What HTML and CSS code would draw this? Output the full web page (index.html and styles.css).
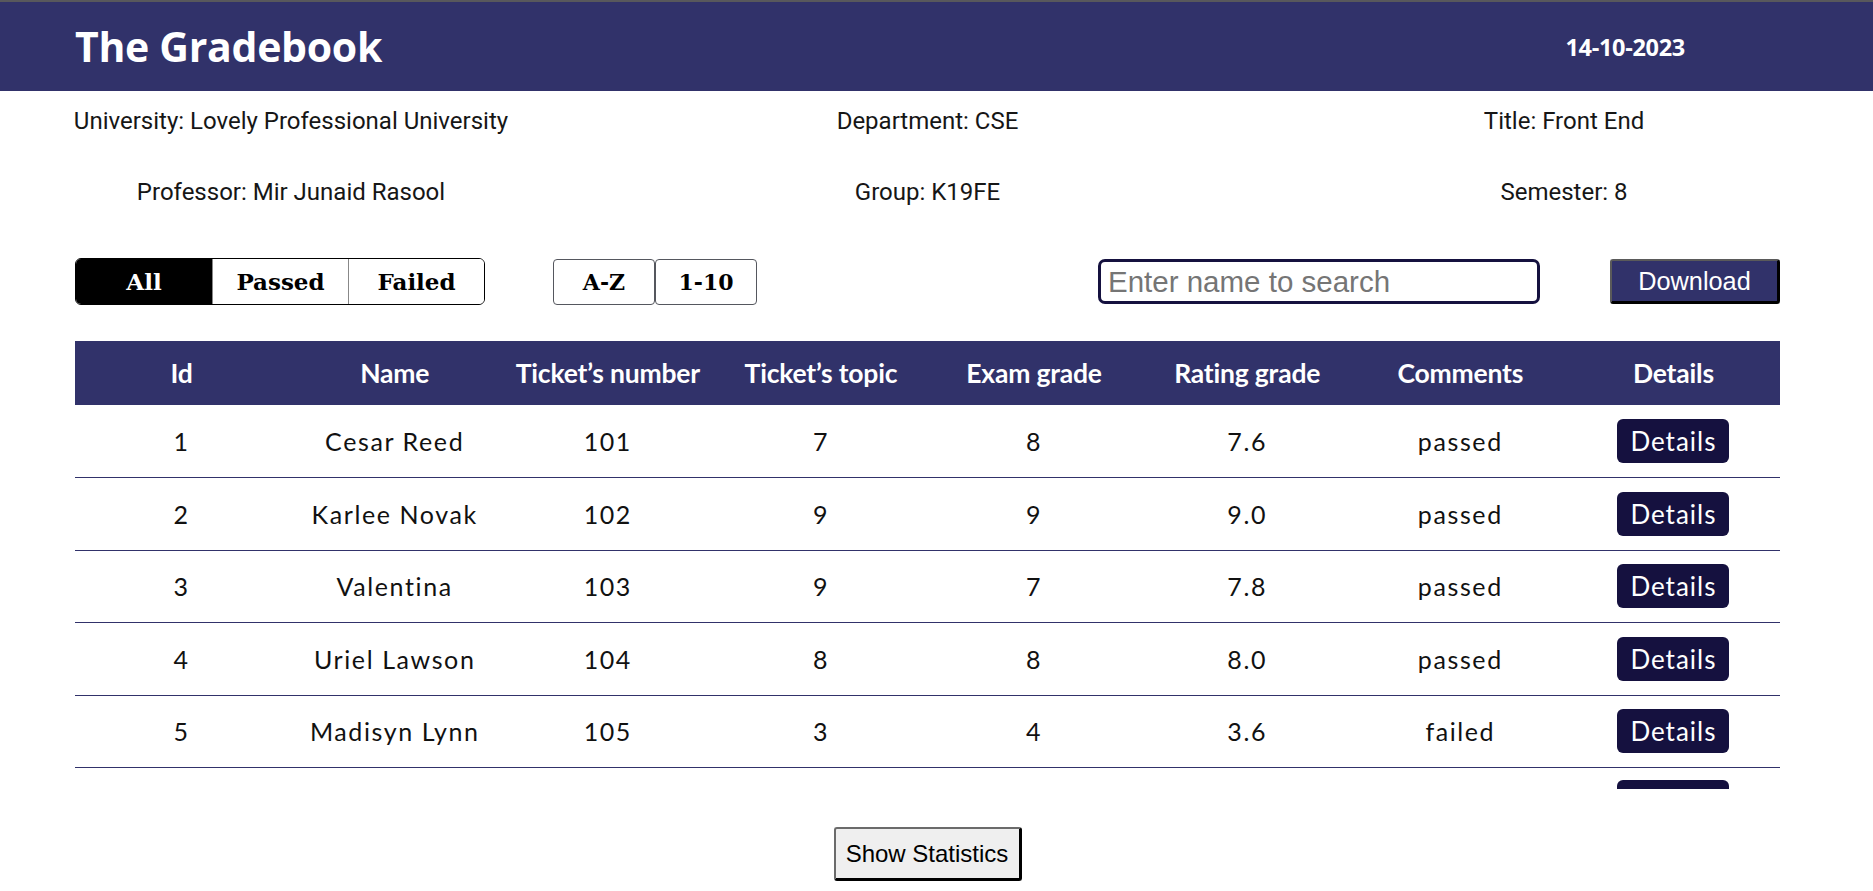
FILE: index.html
```html
<!DOCTYPE html>
<html lang="en">
<head>
<meta charset="utf-8">
<title>The Gradebook</title>
<link rel="stylesheet" href="styles.css">
</head>
<body>
<header class="topbar">
  <h1 class="brand">The Gradebook</h1>
  <div class="date">14-10-2023</div>
</header>

<main class="page">
  <section class="info">
    <div class="info-item">University: Lovely Professional University</div>
    <div class="info-item">Department: CSE</div>
    <div class="info-item">Title: Front End</div>
    <div class="info-item">Professor: Mir Junaid Rasool</div>
    <div class="info-item">Group: K19FE</div>
    <div class="info-item">Semester: 8</div>
  </section>

  <section class="controls">
    <div class="controls-left">
      <div class="segmented">
        <button class="seg seg-active">All</button>
        <button class="seg">Passed</button>
        <button class="seg">Failed</button>
      </div>
      <div class="sorters">
        <button class="sort">A-Z</button>
        <button class="sort">1-10</button>
      </div>
    </div>
    <div class="controls-right">
      <input class="search" type="text" placeholder="Enter name to search">
      <button class="download">Download</button>
    </div>
  </section>

  <section class="table-wrap">
    <table class="grades">
      <thead>
        <tr>
          <th>Id</th><th>Name</th><th>Ticket’s number</th><th>Ticket’s topic</th>
          <th>Exam grade</th><th>Rating grade</th><th>Comments</th><th>Details</th>
        </tr>
      </thead>
      <tbody>
        <tr><td>1</td><td>Cesar Reed</td><td>101</td><td>7</td><td>8</td><td>7.6</td><td>passed</td><td><button class="details">Details</button></td></tr>
        <tr><td>2</td><td>Karlee Novak</td><td>102</td><td>9</td><td>9</td><td>9.0</td><td>passed</td><td><button class="details">Details</button></td></tr>
        <tr><td>3</td><td>Valentina</td><td>103</td><td>9</td><td>7</td><td>7.8</td><td>passed</td><td><button class="details">Details</button></td></tr>
        <tr><td>4</td><td>Uriel Lawson</td><td>104</td><td>8</td><td>8</td><td>8.0</td><td>passed</td><td><button class="details">Details</button></td></tr>
        <tr><td>5</td><td>Madisyn Lynn</td><td>105</td><td>3</td><td>4</td><td>3.6</td><td>failed</td><td><button class="details">Details</button></td></tr>
        <tr class="peek"><td></td><td></td><td></td><td></td><td></td><td></td><td></td><td><button class="details" aria-label="Details"></button></td></tr>
      </tbody>
    </table>
  </section>

  <div class="stats-row">
    <button class="stats">Show Statistics</button>
  </div>
</main>
</body>
</html>
```

FILE: styles.css
```css
* { box-sizing: border-box; }

body {
  margin: 0;
  background: #ffffff;
  font-family: "Roboto", "Liberation Sans", sans-serif;
  color: #111;
}

.topbar {
  height: 91px;
  border-top: 2px solid #58585c;
  background: #31326a;
  display: flex;
  align-items: center;
  justify-content: space-between;
  padding: 0 188px 0 75px;
}

.brand {
  margin: 0;
  font-family: "Open Sans", sans-serif;
  font-weight: 700;
  font-size: 41px;
  letter-spacing: -0.3px;
  color: #ffffff;
  line-height: 1;
}

.date {
  font-family: "Open Sans", sans-serif;
  font-weight: 700;
  font-size: 23.5px;
  letter-spacing: -0.3px;
  color: #ffffff;
}

.page {
  width: 1856px;
  padding: 0 8px;
}

.info {
  display: grid;
  grid-template-columns: repeat(3, 500px);
  column-gap: 136.5px;
  margin-left: 33px;
  padding-top: 15px;
  row-gap: 41px;
}

.info-item {
  text-align: center;
  font-size: 24px;
  line-height: 30px;
  color: #161616;
}

.controls {
  display: flex;
  justify-content: space-between;
  align-items: center;
  margin: 51px 0 0 67px;
  width: 1705px;
}

.controls-left, .controls-right {
  display: flex;
  align-items: center;
}

.controls-left { gap: 68px; }
.controls-right { gap: 70px; }

.segmented {
  display: flex;
  border: 1px solid #000;
  border-radius: 6px;
  overflow: hidden;
  height: 47px;
}

.seg {
  width: 136px;
  background: #fff;
  border: none;
  border-left: 1px solid #888;
  font-family: "DejaVu Serif", serif;
  font-weight: 700;
  font-size: 23px;
  color: #000;
}

.seg:first-child { border-left: none; }

.seg-active {
  background: #000;
  color: #fff;
}

.sorters { display: flex; }

.sort {
  width: 102px;
  height: 46px;
  background: #fff;
  border: 1px solid #55575e;
  border-radius: 4px;
  font-family: "DejaVu Serif", serif;
  font-weight: 700;
  font-size: 22px;
  color: #000;
}

.search {
  width: 442px;
  height: 45px;
  border: 3px solid #15113f;
  border-radius: 7px;
  padding: 0 7px;
  font-family: "Liberation Sans", Arial, sans-serif;
  font-size: 29.5px;
  color: #222;
}

.search::placeholder { color: #757575; }

.download {
  width: 170px;
  height: 45px;
  background: #31326a;
  color: #fff;
  font-family: "Liberation Sans", Arial, sans-serif;
  font-size: 25.3px;
  border-style: solid;
  border-width: 2px 3px 3px 2px;
  border-color: #5a5a5a #000 #000 #5a5a5a;
  border-radius: 3px;
}

.table-wrap {
  margin: 36px 0 0 67px;
  width: 1705px;
  height: 448px;
  overflow: hidden;
}

.grades {
  width: 100%;
  border-collapse: collapse;
  table-layout: fixed;
}

.grades th {
  height: 64px;
  background: #31326a;
  color: #fff;
  font-family: "Lato", sans-serif;
  font-weight: 700;
  font-size: 26.5px;
  letter-spacing: -0.2px;
  text-align: center;
}

.grades td {
  height: 72.5px;
  border-bottom: 1px solid #31326a;
  text-align: center;
  font-family: "Lato", sans-serif;
  font-size: 25px;
  letter-spacing: 1.6px;
  color: #111;
}

.details {
  width: 112px;
  height: 44px;
  background: #15113f;
  color: #fff;
  border: none;
  border-radius: 6px;
  font-family: "Lato", sans-serif;
  font-size: 26px;
  letter-spacing: 1px;
}

.stats-row {
  display: flex;
  justify-content: center;
  margin-top: 38px;
  width: 1705px;
  margin-left: 67px;
}

.stats {
  width: 188px;
  height: 54px;
  background: #efefef;
  color: #000;
  font-family: "Liberation Sans", Arial, sans-serif;
  font-size: 24px;
  border-style: solid;
  border-width: 2px 3px 3px 2px;
  border-color: #6b6b6b #000 #000 #6b6b6b;
  border-radius: 3px;
}
```
